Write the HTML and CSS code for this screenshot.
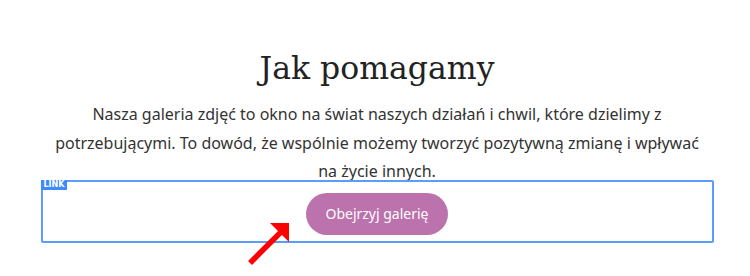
FILE: index.html
```html
<!DOCTYPE html>
<html lang="pl">
<head>
<meta charset="utf-8">
<link rel="stylesheet" href="styles.css">
</head>
<body>
<main class="section">
  <h2 class="title">Jak pomagamy</h2>
  <p class="lead">Nasza galeria zdjęć to okno na świat naszych działań i chwil, które dzielimy z potrzebującymi. To dowód, że wspólnie możemy tworzyć pozytywną zmianę i wpływać na życie innych.</p>
  <div class="link-box">
    <span class="badge">LINK</span>
    <a class="btn" href="#">Obejrzyj galerię</a>
    <svg class="arrow" width="50" height="50" viewBox="0 0 50 50">
      <line x1="4" y1="42" x2="36" y2="10" stroke="#ff0000" stroke-width="5.5"/>
      <polygon points="24,2 43,2 43,21" fill="#ff0000"/>
    </svg>
  </div>
</main>
</body>
</html>
```
FILE: styles.css
```css
html, body {
  margin: 0;
  padding: 0;
  background: #ffffff;
}
body {
  min-height: 276px;
}
.section {
  width: 673px;
  margin: 0 auto;
  padding-top: 44px;
  display: flex;
  flex-direction: column;
  align-items: center;
  transform: translateX(2px);
}
.title {
  margin: 0;
  font-family: "DejaVu Serif", serif;
  font-weight: 400;
  font-size: 31.5px;
  line-height: 48px;
  color: #222222;
}
.lead {
  width: 662px;
  height: 80px;
  margin: 8px 0 0;
  font-family: "Noto Sans", "Open Sans", sans-serif;
  font-size: 16px;
  line-height: 28.5px;
  color: #333333;
  text-align: center;
}
.link-box {
  position: relative;
  box-sizing: border-box;
  width: 673px;
  height: 63px;
  padding-top: 4px;
  border: 2px solid #5b9cff;
  border-radius: 2px;
  display: flex;
  justify-content: center;
  align-items: center;
}
.badge {
  position: absolute;
  left: -2px;
  top: -2px;
  background: #3d8bfd;
  color: #ffffff;
  font-family: "DejaVu Sans", sans-serif;
  font-weight: 700;
  font-size: 8px;
  line-height: 10px;
  padding: 0 3px;
}
.btn {
  display: inline-block;
  background: #bb72ad;
  color: #ffffff;
  text-decoration: none;
  font-family: "Noto Sans", "Open Sans", sans-serif;
  font-size: 14px;
  line-height: 42px;
  height: 42px;
  padding: 0 19px;
  border-radius: 21px;
}
.arrow {
  position: absolute;
  left: 203px;
  top: 39px;
}
```
